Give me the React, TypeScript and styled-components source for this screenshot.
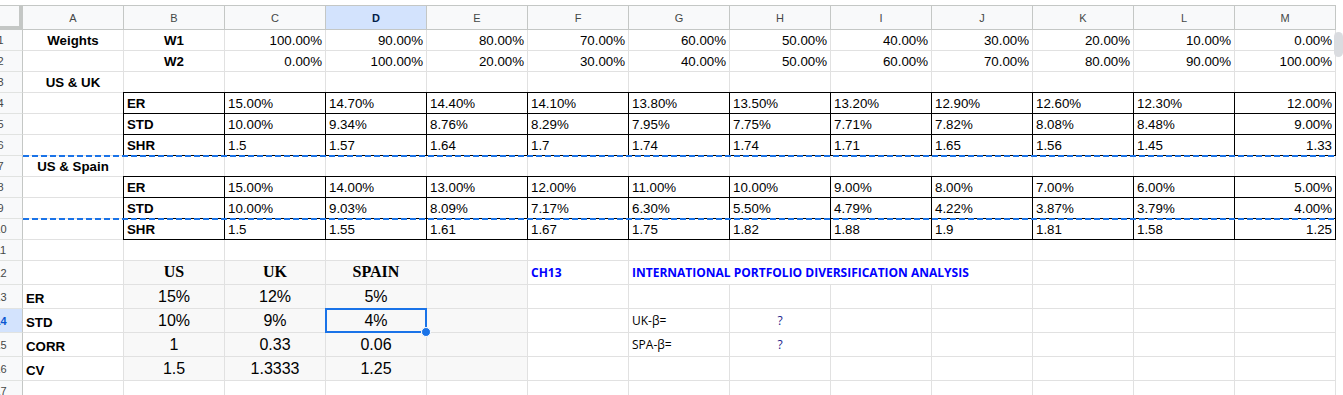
import React from "react";
import styled, { createGlobalStyle, css } from "styled-components";

const GlobalStyle = createGlobalStyle`
  body {
    margin: 0;
    background: #fff;
    overflow: hidden;
  }
`;

const LETTERS = ["A", "B", "C", "D", "E", "F", "G", "H", "I", "J", "K", "L", "M"];
const ACTIVE_COL = "D";
const ACTIVE_ROW = 14;

const W1 = ["100.00%", "90.00%", "80.00%", "70.00%", "60.00%", "50.00%", "40.00%", "30.00%", "20.00%", "10.00%", "0.00%"];
const W2 = ["0.00%", "100.00%", "20.00%", "30.00%", "40.00%", "50.00%", "60.00%", "70.00%", "80.00%", "90.00%", "100.00%"];

const blocks = [
  {
    title: "US & UK",
    titleRow: 3,
    start: 4,
    dashAfter: 6,
    rows: [
      ["ER", "15.00%", "14.70%", "14.40%", "14.10%", "13.80%", "13.50%", "13.20%", "12.90%", "12.60%", "12.30%", "12.00%"],
      ["STD", "10.00%", "9.34%", "8.76%", "8.29%", "7.95%", "7.75%", "7.71%", "7.82%", "8.08%", "8.48%", "9.00%"],
      ["SHR", "1.5", "1.57", "1.64", "1.7", "1.74", "1.74", "1.71", "1.65", "1.56", "1.45", "1.33"],
    ],
  },
  {
    title: "US & Spain",
    titleRow: 7,
    start: 8,
    dashAfter: 9,
    rows: [
      ["ER", "15.00%", "14.00%", "13.00%", "12.00%", "11.00%", "10.00%", "9.00%", "8.00%", "7.00%", "6.00%", "5.00%"],
      ["STD", "10.00%", "9.03%", "8.09%", "7.17%", "6.30%", "5.50%", "4.79%", "4.22%", "3.87%", "3.79%", "4.00%"],
      ["SHR", "1.5", "1.55", "1.61", "1.67", "1.75", "1.82", "1.88", "1.9", "1.81", "1.58", "1.25"],
    ],
  },
];

const summary = [
  ["ER", "15%", "12%", "5%"],
  ["STD", "10%", "9%", "4%"],
  ["CORR", "1", "0.33", "0.06"],
  ["CV", "1.5", "1.3333", "1.25"],
];

// sheet row n sits on grid row n + 1, column A on grid column 2
const gr = (row: number) => row + 1;
const gc = (letter: string) => LETTERS.indexOf(letter) + 2;

// cells that carry their own content; everything else gets an empty grid cell
const isFilled = (n: number, l: string) => {
  if (blocks.some((b) => n >= b.start && n < b.start + 3) && l !== "A") return true;
  if (n === 12 && ["F", "G", "H", "I", "J"].includes(l)) return true;
  if (n >= 12 && n <= 16 && ["A", "B", "C", "D"].includes(l)) return true;
  if ((n === 1 || n === 2) && l !== "A") return true;
  if ((n === 1 || n === 3 || n === 7) && l === "A") return true;
  if ((n === 14 || n === 15) && ["G", "H"].includes(l)) return true;
  return false;
};

const App: React.FC = () => {
  return (
    <>
      <GlobalStyle />
      <Frame>
        <Sheet>
          <Corner $r={1} $c={1} />
          {LETTERS.map((l) => (
            <ColHead key={l} $r={1} $c={gc(l)} $active={l === ACTIVE_COL}>
              {l}
            </ColHead>
          ))}

          {Array.from({ length: 17 }, (_, i) => i + 1).map((n) => (
            <RowHead key={n} $r={gr(n)} $c={1} $active={n === ACTIVE_ROW}>
              {n}
            </RowHead>
          ))}

          {Array.from({ length: 17 }, (_, i) => i + 1).map((n) =>
            LETTERS.map((l) =>
              isFilled(n, l) ? null : (
                <Cell
                  key={`${l}${n}`}
                  $r={gr(n)}
                  $c={gc(l)}
                  $fill={n >= 12 && n <= 16 && l === "E"}
                />
              )
            )
          )}

          <Cell $r={gr(1)} $c={gc("A")} $bold $align="center">Weights</Cell>
          <Cell $r={gr(1)} $c={gc("B")} $bold $align="center">W1</Cell>
          <Cell $r={gr(2)} $c={gc("B")} $bold $align="center">W2</Cell>
          {W1.map((v, i) => (
            <Cell key={`w1${i}`} $r={gr(1)} $c={gc("C") + i} $align="right">{v}</Cell>
          ))}
          {W2.map((v, i) => (
            <Cell key={`w2${i}`} $r={gr(2)} $c={gc("C") + i} $align="right">{v}</Cell>
          ))}

          {blocks.map((b) => (
            <React.Fragment key={b.title}>
              <Cell $r={gr(b.titleRow)} $c={gc("A")} $bold $align="center">{b.title}</Cell>
              {b.rows.map((row, ri) =>
                row.map((v, ci) => (
                  <BoxCell
                    key={`${b.start}-${ri}-${ci}`}
                    $r={gr(b.start + ri)}
                    $c={gc("B") + ci}
                    $top={ri === 0}
                    $left={ci === 0}
                    $bold={ci === 0}
                    $align={ci === row.length - 1 ? "right" : "left"}
                  >
                    {v}
                  </BoxCell>
                ))
              )}
              <Dashes $r={gr(b.dashAfter)} />
            </React.Fragment>
          ))}

          <Cell $r={gr(12)} $c={gc("A")} />
          <CountryHead $r={gr(12)} $c={gc("B")}>US</CountryHead>
          <CountryHead $r={gr(12)} $c={gc("C")}>UK</CountryHead>
          <CountryHead $r={gr(12)} $c={gc("D")}>SPAIN</CountryHead>
          {summary.map((row, ri) => (
            <React.Fragment key={row[0]}>
              <Cell $r={gr(13 + ri)} $c={gc("A")} $bold>{row[0]}</Cell>
              {row.slice(1).map((v, ci) => (
                <BigValue key={ci} $r={gr(13 + ri)} $c={gc("B") + ci} $fill>
                  {v}
                </BigValue>
              ))}
            </React.Fragment>
          ))}

          <Note $r={gr(12)} $c={gc("F")} $blue>CH13</Note>
          <Note $r={gr(12)} $c={gc("G")} $span={4} $blue>
            INTERNATIONAL PORTFOLIO DIVERSIFICATION ANALYSIS
          </Note>
          <Note $r={gr(14)} $c={gc("G")}>UK-β=</Note>
          <Note $r={gr(14)} $c={gc("H")} $align="center" $navy>?</Note>
          <Note $r={gr(15)} $c={gc("G")}>SPA-β=</Note>
          <Note $r={gr(15)} $c={gc("H")} $align="center" $navy>?</Note>

          <Selection $r={gr(ACTIVE_ROW)} $c={gc(ACTIVE_COL)}>
            <Handle />
          </Selection>
        </Sheet>
        <ScrollThumb />
      </Frame>
    </>
  );
};

export default App;

type Place = { $r: number; $c: number; $span?: number };

const place = css<Place>`
  grid-row: ${({ $r }) => $r};
  grid-column: ${({ $c }) => $c} / span ${({ $span }) => $span ?? 1};
`;

const Frame = styled.div`
  position: relative;
  width: 1343px;
  height: 395px;
  overflow: hidden;
  padding-top: 5px;
  box-sizing: border-box;
`;

const Sheet = styled.div`
  display: grid;
  grid-template-columns: 47px repeat(13, 101px);
  grid-template-rows: 25px repeat(11, 21px) repeat(5, 24px) 21px;
  margin-left: -24px;
  font-family: "Liberation Sans", Arial, sans-serif;
  font-size: 13.3px;
  color: #000;
`;

const Corner = styled.div<Place>`
  ${place};
  box-sizing: border-box;
  background: #f8f9fa;
  border-top: 1px solid #c4c7c5;
  border-right: 4px solid #c4c7c5;
  border-bottom: 4px solid #c4c7c5;
`;

const ColHead = styled.div<Place & { $active?: boolean }>`
  ${place};
  box-sizing: border-box;
  display: flex;
  align-items: center;
  justify-content: center;
  background: ${({ $active }) => ($active ? "#d3e3fd" : "#f8f9fa")};
  color: ${({ $active }) => ($active ? "#041e49" : "#444746")};
  font-weight: ${({ $active }) => ($active ? 700 : 400)};
  font-size: 11px;
  border-top: 1px solid #c4c7c5;
  border-right: 1px solid #c4c7c5;
  border-bottom: 1px solid #c4c7c5;
`;

const RowHead = styled.div<Place & { $active?: boolean }>`
  ${place};
  box-sizing: border-box;
  display: flex;
  align-items: center;
  justify-content: center;
  padding-left: 3px;
  background: ${({ $active }) => ($active ? "#d3e3fd" : "#f8f9fa")};
  color: ${({ $active }) => ($active ? "#0b57d0" : "#444746")};
  font-weight: ${({ $active }) => ($active ? 700 : 400)};
  font-size: 11px;
  border-right: 1px solid #c4c7c5;
  border-bottom: 1px solid #e1e3e1;
`;

const Cell = styled.div<Place & { $align?: "left" | "center" | "right"; $bold?: boolean; $fill?: boolean }>`
  ${place};
  box-sizing: border-box;
  display: flex;
  align-items: flex-end;
  justify-content: ${({ $align }) =>
    $align === "center" ? "center" : $align === "right" ? "flex-end" : "flex-start"};
  padding: 0 3px 2px;
  white-space: nowrap;
  font-weight: ${({ $bold }) => ($bold ? 700 : 400)};
  background: ${({ $fill }) => ($fill ? "#f8f8f8" : "transparent")};
  border-right: 1px solid #e1e1e1;
  border-bottom: 1px solid #e1e1e1;
`;

const BoxCell = styled(Cell)<{ $top?: boolean; $left?: boolean }>`
  border-right-color: #000;
  border-bottom-color: #000;
  box-shadow: ${({ $top, $left }) =>
    [$top && "0 -1px 0 #000", $left && "-1px 0 0 #000", $top && $left && "-1px -1px 0 #000"]
      .filter(Boolean)
      .join(", ") || "none"};
`;

const BigValue = styled(Cell)`
  justify-content: center;
  font-size: 16px;
`;

const CountryHead = styled(Cell)`
  justify-content: center;
  font-family: "Liberation Serif", "Times New Roman", serif;
  font-weight: 700;
  font-size: 16px;
  background: #f8f8f8;
  padding-bottom: 3px;
`;

const Note = styled(Cell)<{ $blue?: boolean; $navy?: boolean }>`
  font-family: "Open Sans", sans-serif;
  font-size: 12px;
  font-weight: ${({ $blue }) => ($blue ? 700 : 400)};
  color: ${({ $blue, $navy }) => ($blue ? "#0000ff" : $navy ? "#1c1c8c" : "#000")};
  padding-bottom: 3px;
`;

const Dashes = styled.div<{ $r: number }>`
  grid-row: ${({ $r }) => $r};
  grid-column: 2 / 15;
  align-self: end;
  height: 2px;
  margin-bottom: -1px;
  z-index: 2;
  background: repeating-linear-gradient(90deg, #1a73e8 0 6px, transparent 6px 9px);
`;

const Selection = styled.div<Place>`
  ${place};
  position: relative;
  z-index: 3;
  margin: -1px 0 0 -1px;
  border: 2px solid #1a73e8;
  pointer-events: none;
`;

const Handle = styled.div`
  position: absolute;
  right: -6px;
  bottom: -6px;
  width: 8px;
  height: 8px;
  border-radius: 50%;
  background: #1a73e8;
  border: 1px solid #fff;
`;

const ScrollThumb = styled.div`
  position: absolute;
  top: 32px;
  right: 0;
  width: 9px;
  height: 25px;
  border-radius: 5px;
  background: #dadce0;
`;
